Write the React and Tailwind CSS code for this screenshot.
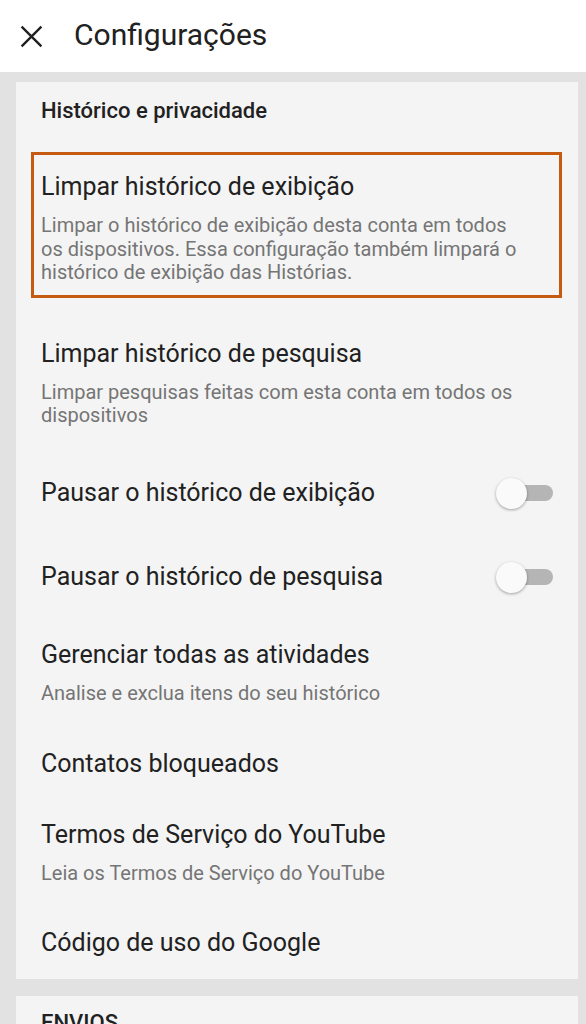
import React from 'react';

const font = { fontFamily: 'Roboto, "Noto Sans", sans-serif' };

const Toggle = () => (
  <div className="relative w-[57px] h-[32px] shrink-0">
    <div className="absolute left-[17px] top-[8px] w-[40px] h-[16px] rounded-full bg-[#b5b5b5]" />
    <div className="absolute left-0 top-[1px] w-[31px] h-[31px] rounded-full bg-[#fafafa] shadow-[0_1px_3px_rgba(0,0,0,0.35)]" />
  </div>
);

const Title = ({ children }) => (
  <div className="text-[25px] leading-[28px] text-[#212121]">{children}</div>
);

const Desc = ({ children }) => (
  <div className="mt-[13px] text-[20px] leading-[23.5px] text-[#757575]">{children}</div>
);

export default function App() {
  return (
    <div className="w-[586px] h-[1024px] overflow-hidden bg-[#e2e2e2]" style={font}>
      {/* top bar */}
      <header className="h-[72px] bg-white flex items-center">
        <svg className="ml-[19px] w-[25px] h-[25px]" viewBox="0 0 24 24" fill="none" stroke="#212121" strokeWidth="2.3">
          <path d="M2.5 2.5l19 19M21.5 2.5l-19 19" />
        </svg>
        <h1 className="ml-[30px] text-[30px] leading-none text-[#212121] pb-[2px]">Configurações</h1>
      </header>

      {/* history card */}
      <section className="mt-[10px] ml-[16px] mr-[8px] bg-[#f4f4f4] pt-[17px] pb-[22px]">
        <div className="px-[25px] text-[22px] leading-[24px] font-medium text-[#212121]">Histórico e privacidade</div>

        <div className="mt-[29px] ml-[15px] mr-[16px] border-[3px] border-[#c55a11] pl-[7px] pr-[8px] pt-[18px] pb-[10px]">
          <Title>Limpar histórico de exibição</Title>
          <Desc>
            Limpar o histórico de exibição desta conta em todos
            <br />
            os dispositivos. Essa configuração também limpará o
            <br />
            histórico de exibição das Histórias.
          </Desc>
        </div>

        <div className="px-[25px] mt-[42px]">
          <Title>Limpar histórico de pesquisa</Title>
          <Desc>Limpar pesquisas feitas com esta conta em todos os dispositivos</Desc>
        </div>

        <div className="pl-[25px] pr-[25px] mt-[49px] flex items-center justify-between">
          <Title>Pausar o histórico de exibição</Title>
          <Toggle />
        </div>

        <div className="pl-[25px] pr-[25px] mt-[52px] flex items-center justify-between">
          <Title>Pausar o histórico de pesquisa</Title>
          <Toggle />
        </div>

        <div className="px-[25px] mt-[48px]">
          <Title>Gerenciar todas as atividades</Title>
          <Desc>Analise e exclua itens do seu histórico</Desc>
        </div>

        <div className="px-[25px] mt-[45px]">
          <Title>Contatos bloqueados</Title>
        </div>

        <div className="px-[25px] mt-[43px]">
          <Title>Termos de Serviço do YouTube</Title>
          <Desc>Leia os Termos de Serviço do YouTube</Desc>
        </div>

        <div className="px-[25px] mt-[43px]">
          <Title>Código de uso do Google</Title>
        </div>
      </section>

      {/* uploads card */}
      <section className="mt-[17px] ml-[16px] mr-[8px] bg-[#f4f4f4] pt-[15px] pb-[20px]">
        <div className="px-[25px] text-[22px] leading-[24px] font-medium text-[#212121]">ENVIOS</div>
      </section>
    </div>
  );
}
